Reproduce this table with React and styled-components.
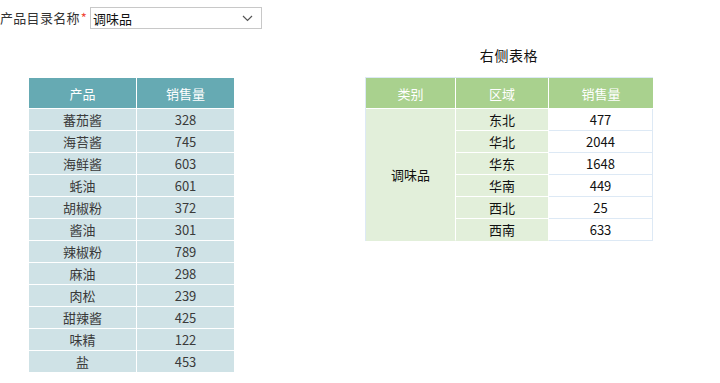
import React from "react";
import styled, { createGlobalStyle } from "styled-components";

const Global = createGlobalStyle`
  html, body { margin: 0; padding: 0; background: #fff; }
  body { font-family: "Noto Sans CJK SC", "Noto Sans", sans-serif; font-size: 13px; color: #333; }
`;

const Page = styled.div`
  width: 720px;
  height: 383px;
  overflow: hidden;
  position: relative;
`;

const FilterBar = styled.div`
  display: flex;
  align-items: center;
  height: 22px;
  margin-top: 7px;
`;

const Label = styled.label`
  flex: none;
  width: 88px;
  font-size: 13px;
  letter-spacing: 0.3px;
  color: #333;
  line-height: 22px;
  white-space: nowrap;
`;

const Required = styled.span`
  color: #f04a3a;
  margin-left: 1px;
`;

const Select = styled.div`
  box-sizing: border-box;
  width: 172px;
  height: 22px;
  margin-left: 2px;
  border: 1px solid #c8c8c8;
  display: flex;
  align-items: center;
  justify-content: space-between;
  padding: 0 8px 0 2px;
  font-size: 13px;
  color: #111;
  background: #fff;
`;

const Content = styled.div`
  display: flex;
  align-items: flex-start;
`;

const LeftPane = styled.div`
  margin-left: 29px;
  margin-top: 49px;
`;

const RightPane = styled.div`
  margin-left: 131px;
  display: flex;
  flex-direction: column;
  align-items: center;
`;

const Title = styled.div`
  height: 48px;
  line-height: 22px;
  padding-top: 15px;
  box-sizing: border-box;
  font-size: 14px;
  letter-spacing: 0.6px;
  color: #111;
`;

const Table = styled.table`
  border-collapse: separate;
  border-spacing: 0;
  table-layout: fixed;
  font-size: 13px;
  text-align: center;
`;

const LeftTable = styled(Table)`
  width: 205px;
`;

const Head = styled.th`
  box-sizing: border-box;
  height: 31px;
  padding: 0;
  font-weight: normal;
  color: #fff;
  background: ${(p) => p.$bg};
  border-bottom: 1px solid #fff;
  border-right: ${(p) => (p.$last ? "none" : "1px solid #fff")};
`;

const LCell = styled.td`
  box-sizing: border-box;
  height: 22px;
  padding: 0;
  color: #3a3a3a;
  background: #cfe2e6;
  border-bottom: 1px solid #fff;
  border-right: ${(p) => (p.$last ? "none" : "1px solid #fff")};
  line-height: 20px;
`;

const RightTable = styled(Table)`
  width: 288px;
  border-top: 1px solid #dde9f5;
  border-left: 1px solid #dde9f5;
  color: #111;
`;

const GreenCell = styled.td`
  box-sizing: border-box;
  height: 22px;
  padding: 0;
  background: #e2efda;
  border-bottom: 1px solid ${(p) => (p.$lastRow ? "#e2efda" : "#fff")};
  border-right: 1px solid #fff;
  line-height: 20px;
`;

const ValueCell = styled.td`
  box-sizing: border-box;
  height: 22px;
  padding: 0;
  background: #fff;
  border-bottom: 1px solid #dde9f5;
  border-right: 1px solid #dde9f5;
  line-height: 20px;
`;

const products = [
  ["蕃茄酱", 328], ["海苔酱", 745], ["海鲜酱", 603], ["蚝油", 601],
  ["胡椒粉", 372], ["酱油", 301], ["辣椒粉", 789], ["麻油", 298],
  ["肉松", 239], ["甜辣酱", 425], ["味精", 122], ["盐", 453],
];

const regions = [
  ["东北", 477], ["华北", 2044], ["华东", 1648],
  ["华南", 449], ["西北", 25], ["西南", 633],
];

const Chevron = () => (
  <svg width="11" height="7" viewBox="0 0 11 7" fill="none">
    <path d="M1 1l4.5 4.5L10 1" stroke="#555" strokeWidth="1.2" />
  </svg>
);

export default function App() {
  return (
    <Page>
      <Global />
      <FilterBar>
        <Label>
          产品目录名称<Required>*</Required>
        </Label>
        <Select>
          <span>调味品</span>
          <Chevron />
        </Select>
      </FilterBar>
      <Content>
        <LeftPane>
          <LeftTable>
            <colgroup>
              <col style={{ width: 108 }} />
              <col style={{ width: 97 }} />
            </colgroup>
            <thead>
              <tr>
                <Head $bg="#66aab3">产品</Head>
                <Head $bg="#66aab3" $last>销售量</Head>
              </tr>
            </thead>
            <tbody>
              {products.map(([n, v]) => (
                <tr key={n}>
                  <LCell>{n}</LCell>
                  <LCell $last>{v}</LCell>
                </tr>
              ))}
            </tbody>
          </LeftTable>
        </LeftPane>
        <RightPane>
          <Title>右侧表格</Title>
          <RightTable>
            <colgroup>
              <col style={{ width: 90 }} />
              <col style={{ width: 93 }} />
              <col style={{ width: 104 }} />
            </colgroup>
            <thead>
              <tr>
                <Head $bg="#a9d18e">类别</Head>
                <Head $bg="#a9d18e">区域</Head>
                <Head $bg="#a9d18e" $last>销售量</Head>
              </tr>
            </thead>
            <tbody>
              {regions.map(([r, v], i) => (
                <tr key={r}>
                  {i === 0 && (
                    <GreenCell rowSpan={regions.length} $lastRow>
                      调味品
                    </GreenCell>
                  )}
                  <GreenCell $lastRow={i === regions.length - 1}>{r}</GreenCell>
                  <ValueCell>{v}</ValueCell>
                </tr>
              ))}
            </tbody>
          </RightTable>
        </RightPane>
      </Content>
    </Page>
  );
}
